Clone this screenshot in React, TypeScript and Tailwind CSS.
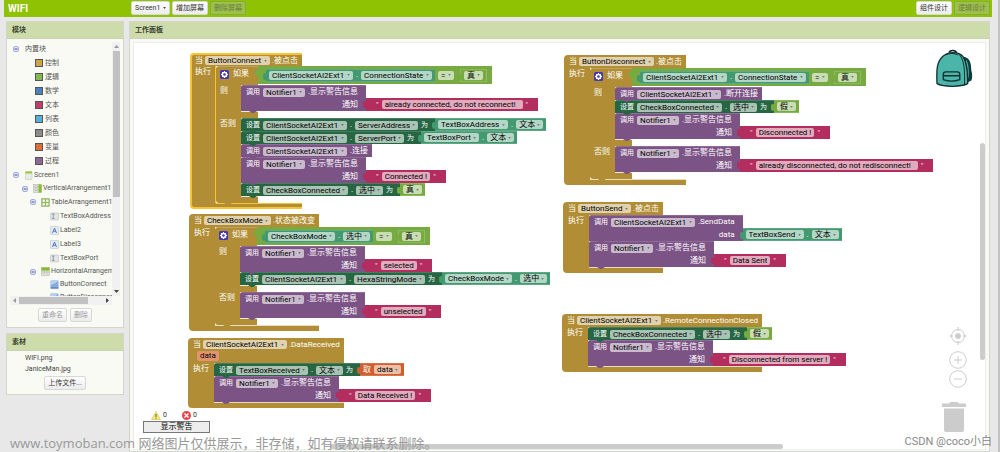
import type { ReactNode } from 'react';
import { clsx } from 'clsx';

type Tone = 'control' | 'call' | 'set' | 'get' | 'logic' | 'text' | 'variable';

const toneBg: Record<Tone, string> = {
  control: 'bg-[#b18e35]',
  call: 'bg-[#7c5385]',
  set: 'bg-[#266643]',
  get: 'bg-[#439970]',
  logic: 'bg-[#77ab41]',
  text: 'bg-[#b32d5e]',
  variable: 'bg-[#d05f2d]',
};

const toneFill: Record<Tone, string> = {
  control: 'fill-[#b18e35]',
  call: 'fill-[#7c5385]',
  set: 'fill-[#266643]',
  get: 'fill-[#439970]',
  logic: 'fill-[#77ab41]',
  text: 'fill-[#b32d5e]',
  variable: 'fill-[#d05f2d]',
};

/* ---------- block pieces ---------- */

function Pick({ value }: { value: string }) {
  return (
    <span className="relative flex h-[9px] shrink-0 items-center rounded-[2px] bg-white/60">
      <select
        aria-label={value}
        className="h-[9px] appearance-none bg-transparent pl-[3px] pr-[8px] text-[8px] leading-[9px] text-black outline-none"
      >
        <option>{value}</option>
      </select>
      <svg viewBox="0 0 4 3" className="pointer-events-none absolute right-[3px] h-[2px] w-[3px] fill-black/40">
        <path d="M0 0h4L2 3z" />
      </svg>
    </span>
  );
}

function Plug({ tone }: { tone: Tone }) {
  return (
    <svg viewBox="0 0 4 9" className={clsx('absolute left-[-3px] top-[2px] h-[9px] w-[4px]', toneFill[tone])}>
      <path d="M4 0v9L3 7.500Q0 9 0 5V3.500Q0 0 3 1.500z" />
    </svg>
  );
}

function Bump({ tone }: { tone: Tone }) {
  return (
    <svg viewBox="0 0 8 2" className={clsx('absolute left-[8px] top-full z-10 h-[2px] w-[8px]', toneFill[tone])}>
      <path d="M0 0h8L5 2H3z" />
    </svg>
  );
}

function Value({ tone, children }: { tone: Tone; children: ReactNode }) {
  return (
    <div
      className={clsx(
        'relative flex h-[13px] shrink-0 items-center gap-[3px] border-y border-white/15 px-[3px]',
        toneBg[tone],
      )}
    >
      <Plug tone={tone} />
      {children}
    </div>
  );
}

function Text({ value }: { value: string }) {
  return (
    <div className="relative flex h-[13px] shrink-0 items-center gap-[3px] bg-[#b32d5e] px-[10px]">
      <Plug tone="text" />
      <span className="text-white/80">"</span>
      <input
        aria-label="文本"
        defaultValue={value}
        className="field-sizing-content h-[9px] rounded-[2px] bg-white/60 px-[3px] text-[8px] leading-[9px] text-black outline-none"
      />
      <span className="text-white/80">"</span>
    </div>
  );
}

function Getter({ component, property }: { component: string; property: string }) {
  return (
    <Value tone="get">
      <Pick value={component} />
      <span>.</span>
      <Pick value={property} />
    </Value>
  );
}

function Bool({ value }: { value: string }) {
  return (
    <Value tone="logic">
      <Pick value={value} />
    </Value>
  );
}

function SetBlock({ component, property, children }: { component: string; property: string; children: ReactNode }) {
  return (
    <div className="relative flex w-max">
      <div className="flex h-[13px] items-center gap-[3px] rounded-tl-[2px] border-t border-white/15 bg-[#266643] pl-[5px] pr-[7px]">
        <span className="text-[7px]">设置</span>
        <Pick value={component} />
        <span>.</span>
        <Pick value={property} />
        <span className="text-[7px]">为</span>
      </div>
      {children}
      <Bump tone="set" />
    </div>
  );
}

interface CallProps {
  component: string;
  method: string;
  arg?: string;
  children?: ReactNode;
}

function CallBlock({ component, method, arg, children }: CallProps) {
  return (
    <div className="relative flex w-max items-end">
      <div className="rounded-tl-[2px] border-t border-white/15 bg-[#7c5385] pl-[5px]">
        <div className={clsx('flex h-[12px] items-center gap-[3px]', arg ? 'pr-[8px]' : 'pr-[4px]')}>
          <span className="text-[7px]">调用</span>
          <Pick value={component} />
          <span>{method}</span>
        </div>
        {arg && <div className="flex h-[13px] items-center justify-end pr-[8px]">{arg}</div>}
      </div>
      {children}
      <Bump tone="call" />
    </div>
  );
}

function Notify({ message }: { message: string }) {
  return (
    <CallBlock component="Notifier1" method=".显示警告信息" arg="通知">
      <Text value={message} />
    </CallBlock>
  );
}

function Gear() {
  return (
    <svg viewBox="0 0 18 18" className="h-[9px] w-[9px] shrink-0">
      <rect width="18" height="18" rx="3" fill="#4338b8" />
      <circle cx="9" cy="9" r="4.200" fill="none" stroke="#fff" strokeWidth="3" />
      <path d="M9 2v3M9 13v3M2 9h3M13 9h3M4 4l2 2M12 12l2 2M4 14l2-2M12 6l2-2" stroke="#fff" strokeWidth="2" />
    </svg>
  );
}

function IfBlock({ test, then, otherwise }: { test: ReactNode; then: ReactNode; otherwise: ReactNode }) {
  return (
    <div className="relative">
      <div className="flex">
        <div className="flex h-[19px] w-[42px] items-center gap-[4px] rounded-tl-[3px] border-t border-white/20 bg-[#b18e35] pb-[4px] pl-[4px]">
          <Gear />
          <span>如果</span>
        </div>
        <div className="relative flex h-[18px] items-center gap-[3px] bg-[#77ab41] pl-[8px] pr-[5px]">
          <Plug tone="logic" />
          {test}
          <Pick value="=" />
          <div className="ml-[3px] border-x border-white/20">
            <Bool value="真" />
          </div>
        </div>
      </div>
      <div className="flex">
        <div className="w-[25px] bg-[#b18e35] pl-[4px] leading-[12px]">则</div>
        <div>{then}</div>
      </div>
      <div className="h-[7px] w-[42px] bg-[#b18e35] pl-[25px]">
        <div className="h-px bg-white/80" />
      </div>
      <div className="flex">
        <div className="w-[25px] bg-[#b18e35] pl-[4px] leading-[12px]">否则</div>
        <div>{otherwise}</div>
      </div>
      <div className="h-[7px] w-[42px] rounded-bl-[3px] bg-[#b18e35] pl-[25px]">
        <div className="h-px bg-white/80" />
      </div>
      <Bump tone="control" />
    </div>
  );
}

interface EventProps {
  component: string;
  event: string;
  param?: string;
  selected?: boolean;
  className: string;
  children: ReactNode;
}

function EventBlock({ component, event, param, selected, className, children }: EventProps) {
  return (
    <section
      className={clsx(
        'absolute grid w-max grid-cols-[max-content_1fr] text-[8px] leading-[10px] text-white',
        className,
      )}
    >
      <div
        className={clsx(
          'flex h-[13px] items-center gap-[2px] rounded-tl-[4px] bg-[#b18e35] pr-[4px]',
          selected ? 'border-l-2 border-t-2 border-[#f8c32c] pl-[3px]' : 'pl-[5px]',
        )}
      >
        <span>当</span>
        <Pick value={component} />
        <span>{event}</span>
      </div>
      {/* the body may be wider than the header, so it spans past the header column */}
      <div className="col-span-2 col-start-1 flex flex-col">
        {param && (
          <div className="flex h-[12px] w-[156px] items-start bg-[#b18e35] pl-[9px]">
            <span className="rounded-[2px] bg-[#e3946f] px-[3px] leading-[10px] text-black">{param}</span>
          </div>
        )}
        <div className="flex">
          <div
            className={clsx(
              'w-[26px] shrink-0 bg-[#b18e35] leading-[12px]',
              selected ? 'border-l-2 border-r border-[#f8c32c] pl-[3px]' : 'pl-[5px]',
            )}
          >
            执行
          </div>
          <div>{children}</div>
        </div>
      </div>
      <div
        className={clsx(
          'col-start-1 rounded-bl-[4px] bg-[#b18e35]',
          selected ? 'h-[6px] border-b-2 border-l-2 border-[#f8c32c] pl-[24px]' : 'h-[6px] pl-[26px]',
        )}
      >
        <div className={clsx('h-px', selected ? 'bg-[#f8c32c]' : 'bg-white/70')} />
      </div>
    </section>
  );
}

/* ---------- side panels ---------- */

const drawers = [
  { name: '控制', color: 'bg-[#cba546]' },
  { name: '逻辑', color: 'bg-[#86b852]' },
  { name: '数学', color: 'bg-[#4a82bd]' },
  { name: '文本', color: 'bg-[#c23d6d]' },
  { name: '列表', color: 'bg-[#52b2dc]' },
  { name: '颜色', color: 'bg-[#8c8c8c]' },
  { name: '变量', color: 'bg-[#dc7138]' },
  { name: '过程', color: 'bg-[#8d6797]' },
];

function Fold() {
  return (
    <svg viewBox="0 0 12 12" className="h-[6px] w-[6px] shrink-0">
      <rect x="1" y="1" width="10" height="10" rx="3" fill="#e6e9fa" stroke="#8b94d0" strokeWidth="1.500" />
      <path d="M3 6h6" stroke="#3c4bb0" strokeWidth="2" />
    </svg>
  );
}

function NodeIcon({ kind }: { kind: string }) {
  return (
    <svg viewBox="0 0 18 18" className="h-[9px] w-[9px] shrink-0">
      {kind === 'screen' && (
        <>
          <rect x="3" y="1" width="13" height="16" rx="1" fill="#e9ebe6" stroke="#b9bbb6" />
          <path d="M3 1h13v4H3z" fill="#9ac63a" />
        </>
      )}
      {kind === 'vertical' && (
        <>
          <rect x="1" y="1" width="16" height="16" fill="#dfe3dc" stroke="#a9aca6" />
          <path d="M11 1h6v16h-6z" fill="#84bd24" />
          <path d="M4 4h5v3H4zM4 10h5v3H4z" fill="#fff" stroke="#999" />
        </>
      )}
      {kind === 'table' && (
        <>
          <rect x="1" y="1" width="16" height="16" fill="#8dbb4a" stroke="#9aa58b" />
          <path d="M3 3h5v5H3zM10 3h5v5h-5zM3 10h5v5H3zM10 10h5v5h-5z" fill="#eef3e7" />
        </>
      )}
      {kind === 'horizontal' && (
        <>
          <rect x="1" y="1" width="16" height="16" fill="#dfe3dc" stroke="#a9aca6" />
          <path d="M1 1h16v6H1z" fill="#84bd24" />
          <path d="M4 8h3v4H4zM11 8h3v4h-3z" fill="#fff" stroke="#999" />
        </>
      )}
      {kind === 'textbox' && (
        <>
          <rect x="1" y="2" width="16" height="14" rx="1" fill="#e4e5e6" stroke="#b5b7ba" />
          <path d="M4 4h5M4 13h5M6.500 4v9" stroke="#76839b" strokeWidth="1.500" />
        </>
      )}
      {kind === 'label' && (
        <>
          <rect x="1" y="1" width="16" height="16" rx="1" fill="#e6ebf3" stroke="#b5bac4" />
          <path d="M5 14l4-10 4 10M6.500 10.500h5" fill="none" stroke="#5078c0" strokeWidth="2" />
        </>
      )}
      {kind === 'button' && (
        <>
          <rect x="1" y="1" width="16" height="16" rx="2" fill="#83abdc" />
          <path d="M1 1h16C12 6 7 9 1 10z" fill="#b8d0ee" />
          <path d="M1 16h16" stroke="#4a71a6" strokeWidth="2" />
        </>
      )}
    </svg>
  );
}

const components = [
  { name: 'Screen1', kind: 'screen', row: 'h-[14px] pl-[3px]', fold: true },
  { name: 'VerticalArrangement1', kind: 'vertical', row: 'h-[13px] pl-[12px]', fold: true },
  { name: 'TableArrangement1', kind: 'table', row: 'h-[14px] pl-[20px]', fold: true },
  { name: 'TextBoxAddress', kind: 'textbox', row: 'h-[14px] pl-[40px]' },
  { name: 'Label2', kind: 'label', row: 'h-[14px] pl-[40px]' },
  { name: 'Label3', kind: 'label', row: 'h-[14px] pl-[40px]' },
  { name: 'TextBoxPort', kind: 'textbox', row: 'h-[14px] pl-[40px]' },
  { name: 'HorizontalArrangement1', kind: 'horizontal', row: 'h-[13px] pl-[20px]', fold: true },
  { name: 'ButtonConnect', kind: 'button', row: 'h-[13px] pl-[40px]' },
  { name: 'ButtonDisconnect', kind: 'button', row: 'h-[13px] pl-[40px]' },
];

function Panel({ title, className, children }: { title: string; className?: string; children: ReactNode }) {
  return (
    <section className={clsx('border border-[#d3d6cd] bg-[#f8faf3]', className)}>
      <h2 className="flex h-[17px] shrink-0 items-center border-b border-[#c8d2b4] bg-[#cddcaa] pl-[5px] text-[7px] font-bold text-[#3b4230]">
        {title}
      </h2>
      {children}
    </section>
  );
}

function ToolButton({ children, dim, pressed }: { children: ReactNode; dim?: boolean; pressed?: boolean }) {
  return (
    <button
      type="button"
      className={clsx(
        'h-[14px] rounded-[2px] border px-[3px] text-[7px] leading-[12px]',
        pressed
          ? 'border-[#86ae35] bg-[#9dbf4b] text-[#6b7c45]'
          : 'border-[#d8d8d8] bg-linear-to-b from-white to-[#ececec]',
        !pressed && (dim ? 'text-[#999]' : 'text-[#333]'),
      )}
    >
      {children}
    </button>
  );
}

function Tree() {
  return (
    <div className="mx-[3px] mt-[3px]">
      <div className="flex h-[254px]">
        <ul className="min-w-0 flex-1 overflow-hidden text-[7px] text-[#555]">
          <li className="flex h-[14px] items-center gap-[6px] pl-[3px]">
            <Fold />
            内置块
          </li>
          {drawers.map((d) => (
            <li key={d.name} className="flex h-[14px] items-center gap-[2px] pl-[25px]">
              <span className={clsx('h-[8px] w-[8px] border border-[#555]', d.color)} />
              {d.name}
            </li>
          ))}
          {components.map((c) => (
            <li key={c.name} className={clsx('flex items-center gap-[1px] whitespace-nowrap', c.row)}>
              {c.fold && (
                <span className="mr-[4px]">
                  <Fold />
                </span>
              )}
              <NodeIcon kind={c.kind} />
              {c.name}
            </li>
          ))}
        </ul>
        <div className="flex w-[8px] flex-col items-center justify-between bg-[#f1f1f1]">
          <svg viewBox="0 0 5 3" className="my-[3px] h-[3px] w-[5px] fill-[#999]">
            <path d="M0 3h5L2.500 0z" />
          </svg>
          <div className="mb-auto h-[146px] w-[7px] bg-[#c1c1c1]" />
          <svg viewBox="0 0 5 3" className="my-[3px] h-[3px] w-[5px] fill-[#444]">
            <path d="M0 0h5L2.500 3z" />
          </svg>
        </div>
      </div>
      <div className="mr-[8px] flex h-[9px] items-center bg-[#f1f1f1]">
        <svg viewBox="0 0 3 5" className="mx-[3px] h-[5px] w-[3px] fill-[#999]">
          <path d="M3 0v5L0 2.500z" />
        </svg>
        <div className="h-[7px] w-[69px] bg-[#c1c1c1]" />
        <svg viewBox="0 0 3 5" className="ml-auto mr-[3px] h-[5px] w-[3px] fill-[#444]">
          <path d="M0 0v5L3 2.500z" />
        </svg>
      </div>
    </div>
  );
}

/* ---------- workspace drawings ---------- */

function Backpack() {
  return (
    <svg viewBox="0 0 112 116" className="absolute right-[12px] top-[6px] h-[39px] w-[37px]" strokeLinejoin="round">
      <path d="M82 22c22 4 24 20 25 42 4 12 3 24 0 30l-16 9z" fill="#0d3b3a" />
      <path d="M90 34c8 8 8 30 7 52" stroke="#4bb5aa" strokeWidth="4" fill="none" />
      <path d="M40 10c2-9 20-9 22 1" stroke="#123" strokeWidth="5" fill="none" />
      <path d="M3 104C2 70 0 42 18 24 32 8 66 4 80 20c14 18 16 54 16 84-20 10-72 11-93 0z" fill="#4bb5aa" stroke="#12302f" strokeWidth="4" />
      <path d="M66 12c20 12 22 56 20 97" stroke="#12302f" strokeWidth="3" fill="none" />
      <path d="M28 17c12-6 28-6 38 0" stroke="#12302f" strokeWidth="3" fill="none" />
      <path d="M22 76c0-6 4-8 8-8h34c5 0 8 3 8 8v16c-14 5-36 5-50 0zM21 80h50" fill="none" stroke="#12302f" strokeWidth="4" />
    </svg>
  );
}

function Zoom() {
  return (
    <div className="absolute bottom-[17px] right-[18px] flex flex-col items-center text-[#ccc]">
      <button type="button" aria-label="居中" className="mb-[6px]">
        <svg viewBox="0 0 18 18" className="h-[18px] w-[18px]" fill="none" stroke="currentColor">
          <circle cx="9" cy="9" r="6.500" />
          <circle cx="9" cy="9" r="2.500" fill="currentColor" />
          <path d="M9 0v4M9 14v4M0 9h4M14 9h4" />
        </svg>
      </button>
      <button type="button" aria-label="放大">
        <svg viewBox="0 0 18 18" className="h-[18px] w-[18px]" fill="none" stroke="currentColor">
          <circle cx="9" cy="9" r="8.300" />
          <path d="M9 5v8M5 9h8" />
        </svg>
      </button>
      <button type="button" aria-label="缩小" className="mt-[1px]">
        <svg viewBox="0 0 18 18" className="h-[18px] w-[18px]" fill="none" stroke="currentColor">
          <circle cx="9" cy="9" r="8.300" />
          <path d="M5 9h8" />
        </svg>
      </button>
      <svg viewBox="0 0 24 30" className="ml-[-8px] mt-[14px] h-[30px] w-[24px] fill-[#ccc]">
        <path d="M0 1.500h7L8.500 0h7L17 1.500h7V5H0zM2 6.500h20V28q0 2-2 2H4q-2 0-2-2z" />
      </svg>
    </div>
  );
}

function Warnings() {
  return (
    <div className="absolute bottom-[16px] left-[9px] w-[67px] text-[7px] text-[#333]">
      <div className="flex h-[12px] items-center gap-[2px] pl-[8px]">
        <svg viewBox="0 0 20 18" className="h-[9px] w-[10px]">
          <path d="M10 1l9 16H1z" fill="#f7ee63" stroke="#b9b26a" />
          <path d="M10 6v6M10 13.500v2" stroke="#555" strokeWidth="2" />
        </svg>
        <span>0</span>
        <svg viewBox="0 0 18 18" className="ml-[13px] h-[9px] w-[9px]">
          <circle cx="9" cy="9" r="9" fill="#e2474b" />
          <path d="M5 5l8 8M13 5l-8 8" stroke="#fff" strokeWidth="2.500" />
        </svg>
        <span>0</span>
      </div>
      <button type="button" className="h-[12px] w-full border border-[#777] bg-[#ededed] text-[8px] leading-[10px] text-black">
        显示警告
      </button>
    </div>
  );
}

export default function App() {
  return (
    <div className="relative flex min-h-screen flex-col border-r-2 border-[#c2c2c2] bg-[#e8e8e8] pl-[4px] pr-[6px] font-[Roboto,'Noto_Sans_CJK_SC',sans-serif]">
      <header className="flex h-[17px] items-start gap-[2px] bg-[#8fc202] pr-[2px] pt-[1px]">
        <h1 className="w-[125px] pl-[4px] text-[10px] font-bold leading-[15px] text-white">WIFI</h1>
        <span className="relative flex items-center">
          <select
            aria-label="屏幕"
            className="h-[14px] w-[39px] appearance-none rounded-[2px] border border-[#d8d8d8] bg-linear-to-b from-white to-[#ececec] pl-[3px] text-[7px] text-[#333]"
          >
            <option>Screen1</option>
          </select>
          <svg viewBox="0 0 4 3" className="pointer-events-none absolute right-[4px] h-[2px] w-[3px] fill-[#444]">
            <path d="M0 0h4L2 3z" />
          </svg>
        </span>
        <ToolButton>增加屏幕</ToolButton>
        <ToolButton pressed>删除屏幕</ToolButton>
        <div className="ml-auto flex gap-[2px]">
          <ToolButton>组件设计</ToolButton>
          <ToolButton pressed>逻辑设计</ToolButton>
        </div>
      </header>

      <div className="flex flex-1 gap-[5px] pl-[2px] pr-[2px] pt-[4px]">
        <aside className="flex w-[118px] shrink-0 flex-col gap-[5px]">
          <Panel title="模块">
            <Tree />
            <div className="flex justify-center gap-[3px] pb-[5px] pt-[3px]">
              <ToolButton dim>重命名</ToolButton>
              <ToolButton dim>删除</ToolButton>
            </div>
          </Panel>
          <Panel title="素材">
            <div className="flex flex-col px-[18px] pb-[4px] pt-[2px] text-[7px] leading-[11px] text-[#444]">
              <a href="#wifi">WIFI.png</a>
              <a href="#janice">JaniceMan.jpg</a>
              <div className="flex justify-center pt-[1px]">
                <ToolButton>上传文件...</ToolButton>
              </div>
            </div>
          </Panel>
        </aside>

        <Panel title="工作面板" className="flex min-w-0 flex-1 flex-col">
          <main className="relative mx-[3px] mb-px mt-[3px] flex-1 overflow-hidden border border-[#ededed] bg-white">
            <EventBlock component="ButtonConnect" event=".被点击" selected className="left-[56px] top-[10px]">
              <IfBlock
                test={<Getter component="ClientSocketAI2Ext1" property="ConnectionState" />}
                then={<Notify message="already connected, do not reconnect!  " />}
                otherwise={
                  <>
                    <SetBlock component="ClientSocketAI2Ext1" property="ServerAddress">
                      <Getter component="TextBoxAddress" property="文本" />
                    </SetBlock>
                    <SetBlock component="ClientSocketAI2Ext1" property="ServerPort">
                      <Getter component="TextBoxPort" property="文本" />
                    </SetBlock>
                    <CallBlock component="ClientSocketAI2Ext1" method=".连接" />
                    <Notify message="Connected !" />
                    <SetBlock component="CheckBoxConnected" property="选中">
                      <Bool value="真" />
                    </SetBlock>
                  </>
                }
              />
            </EventBlock>

            <EventBlock component="CheckBoxMode" event=".状态被改变" className="left-[55px] top-[171px]">
              <IfBlock
                test={<Getter component="CheckBoxMode" property="选中" />}
                then={
                  <>
                    <Notify message="selected" />
                    <SetBlock component="ClientSocketAI2Ext1" property="HexaStringMode">
                      <Getter component="CheckBoxMode" property="选中" />
                    </SetBlock>
                  </>
                }
                otherwise={<Notify message="unselected" />}
              />
            </EventBlock>

            <EventBlock component="ClientSocketAI2Ext1" event=".DataReceived" param="data" className="left-[54px] top-[295px]">
              <SetBlock component="TextBoxReceived" property="文本">
                <Value tone="variable">
                  <span>取</span>
                  <Pick value="data" />
                </Value>
              </SetBlock>
              <Notify message="Data Received !" />
            </EventBlock>

            <EventBlock component="ButtonDisconnect" event=".被点击" className="left-[430px] top-[12px]">
              <IfBlock
                test={<Getter component="ClientSocketAI2Ext1" property="ConnectionState" />}
                then={
                  <>
                    <CallBlock component="ClientSocketAI2Ext1" method=".断开连接" />
                    <SetBlock component="CheckBoxConnected" property="选中">
                      <Bool value="假" />
                    </SetBlock>
                    <Notify message="Disconnected !" />
                  </>
                }
                otherwise={<Notify message="already disconnected, do not redisconnect!  " />}
              />
            </EventBlock>

            <EventBlock component="ButtonSend" event=".被点击" className="left-[429px] top-[159px]">
              <CallBlock component="ClientSocketAI2Ext1" method=".SendData" arg="data">
                <Getter component="TextBoxSend" property="文本" />
              </CallBlock>
              <Notify message="Data Sent" />
            </EventBlock>

            <EventBlock component="ClientSocketAI2Ext1" event=".RemoteConnectionClosed" className="left-[428px] top-[271px]">
              <SetBlock component="CheckBoxConnected" property="选中">
                <Bool value="假" />
              </SetBlock>
              <Notify message="Disconnected from server !" />
            </EventBlock>

            <Backpack />
            <Zoom />
            <Warnings />
            <div className="absolute right-0 top-[100px] h-[217px] w-[5px] rounded-full bg-[#ccc]" />
            <div className="absolute bottom-0 left-[196px] h-[5px] w-[453px] rounded-full bg-[#ccc]" />
          </main>
        </Panel>
      </div>

      <p className="absolute bottom-0 left-[10px] font-['Open_Sans','Noto_Sans_CJK_SC',sans-serif] text-[13px] leading-[18px] text-[#999]">
        www.toymoban.com 网络图片仅供展示，非存储，如有侵权请联系删除。
      </p>
      <p className="absolute bottom-[1px] right-[6px] text-[11px] leading-[18px] text-[#888]">CSDN @coco小白</p>
    </div>
  );
}
